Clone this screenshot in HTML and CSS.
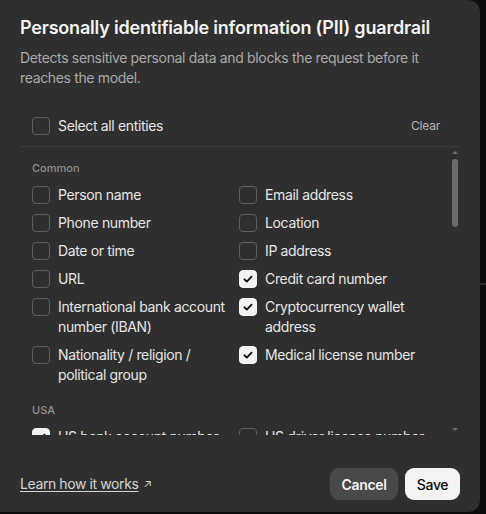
FILE: index.html
```html
<!DOCTYPE html>
<html lang="en">
<head>
<meta charset="utf-8">
<title>PII guardrail</title>
<link rel="stylesheet" href="styles.css">
</head>
<body>
<div class="backdrop-strip"></div>
<div class="dialog">
  <h1 class="title">Personally identifiable information (PII) guardrail</h1>
  <p class="desc">Detects sensitive personal data and blocks the request before it reaches the model.</p>

  <div class="select-all">
    <label class="item">
      <span class="box"></span>
      <span class="label">Select all entities</span>
    </label>
    <span class="clear">Clear</span>
  </div>

  <div class="scroll-wrap">
    <div class="scroll">
      <div class="section-title">Common</div>
      <div class="grid">
        <div class="item"><span class="box"></span><span class="label">Person name</span></div>
        <div class="item"><span class="box"></span><span class="label">Email address</span></div>
        <div class="item"><span class="box"></span><span class="label">Phone number</span></div>
        <div class="item"><span class="box"></span><span class="label">Location</span></div>
        <div class="item"><span class="box"></span><span class="label">Date or time</span></div>
        <div class="item"><span class="box"></span><span class="label">IP address</span></div>
        <div class="item"><span class="box"></span><span class="label">URL</span></div>
        <div class="item"><span class="box checked"><svg viewBox="0 0 18 18"><path d="M5 9.3l2.7 2.7L13 6.3"/></svg></span><span class="label">Credit card number</span></div>
        <div class="item"><span class="box"></span><span class="label">International bank account number (IBAN)</span></div>
        <div class="item"><span class="box checked"><svg viewBox="0 0 18 18"><path d="M5 9.3l2.7 2.7L13 6.3"/></svg></span><span class="label">Cryptocurrency wallet address</span></div>
        <div class="item"><span class="box"></span><span class="label">Nationality / religion / political group</span></div>
        <div class="item"><span class="box checked"><svg viewBox="0 0 18 18"><path d="M5 9.3l2.7 2.7L13 6.3"/></svg></span><span class="label">Medical license number</span></div>
      </div>
      <div class="section-title usa">USA</div>
      <div class="grid">
        <div class="item"><span class="box checked"><svg viewBox="0 0 18 18"><path d="M5 9.3l2.7 2.7L13 6.3"/></svg></span><span class="label">US bank account number</span></div>
        <div class="item"><span class="box"></span><span class="label">US driver license number</span></div>
      </div>
    </div>
    <div class="scrollbar">
      <span class="arrow up"></span>
      <span class="thumb"></span>
      <span class="arrow down"></span>
    </div>
  </div>

  <div class="footer">
    <a class="learn" href="#">Learn how it works</a><span class="ext">↗</span>
    <div class="actions">
      <button class="btn cancel">Cancel</button>
      <button class="btn save">Save</button>
    </div>
  </div>
</div>
</body>
</html>
```

FILE: styles.css
```css
* { box-sizing: border-box; }
html, body {
  margin: 0;
  height: 100%;
}
body {
  background: #0d0d0d;
  font-family: Inter, "Noto Sans", "Liberation Sans", sans-serif;
  color: #ececec;
  overflow: hidden;
  position: relative;
}
.backdrop-strip {
  position: absolute;
  left: 480px;
  top: 283px;
  width: 6px;
  height: 2px;
  background: #2a2a2a;
}
.dialog {
  position: relative;
  width: 480px;
  height: 512px;
  background: #2f2f2f;
  border-radius: 0 12px 12px 0;
  padding: 16px 20px 12px 20px;
  display: flex;
  flex-direction: column;
}
.title {
  margin: 0;
  font-size: 18px;
  line-height: 24px;
  font-weight: 600;
  color: #f3f3f3;
  letter-spacing: -0.2px;
}
.desc {
  margin: 8px 0 0 0;
  font-size: 14px;
  line-height: 20px;
  color: #a8a8a8;
  letter-spacing: -0.35px;
  max-width: 420px;
}
.select-all {
  margin-top: 28px;
  padding: 0 20px 10px 12px;
  border-bottom: 1px solid #3d3d3d;
  display: flex;
  align-items: center;
  justify-content: space-between;
}
.clear {
  font-size: 12px;
  line-height: 16px;
  color: #b4b4b4;
  font-weight: 400;
  letter-spacing: -0.2px;
}
.item {
  display: flex;
  align-items: flex-start;
  gap: 8px;
}
.box {
  flex: none;
  width: 18px;
  height: 18px;
  margin-top: 1px;
  border: 1px solid #5e5e5e;
  border-radius: 4px;
  display: flex;
  align-items: center;
  justify-content: center;
}
.box.checked {
  background: #f2f2f2;
  border-color: #f2f2f2;
}
.box svg {
  width: 18px;
  height: 18px;
  fill: none;
  stroke: #0d0d0d;
  stroke-width: 2;
  stroke-linecap: round;
  stroke-linejoin: round;
}
.label {
  font-size: 14px;
  line-height: 20px;
  color: #e6e6e6;
  letter-spacing: -0.35px;
}
.scroll-wrap {
  position: relative;
  height: 288px;
  overflow: hidden;
}
.scroll {
  padding: 13px 0 0 12px;
}
.section-title {
  font-size: 11px;
  line-height: 16px;
  font-weight: 500;
  color: #8e8e8e;
  margin-bottom: 9px;
}
.section-title.usa {
  margin-top: 17px;
}
.grid {
  display: grid;
  grid-template-columns: 199px 199px;
  column-gap: 8px;
  row-gap: 8px;
}
.scrollbar {
  position: absolute;
  top: 0;
  right: 2px;
  width: 6px;
  height: 288px;
}
.thumb {
  position: absolute;
  left: 0;
  top: 12px;
  width: 6px;
  height: 68px;
  border-radius: 3px;
  background: #6c6c6c;
}
.arrow {
  position: absolute;
  left: 0;
  width: 0;
  height: 0;
  border-left: 3px solid transparent;
  border-right: 3px solid transparent;
}
.arrow.up {
  top: 4px;
  border-bottom: 3px solid #6c6c6c;
}
.arrow.down {
  top: 281px;
  border-top: 3px solid #6c6c6c;
}
.footer {
  margin-top: auto;
  display: flex;
  align-items: center;
}
.learn {
  font-size: 14px;
  line-height: 20px;
  color: #d4d4d4;
  letter-spacing: -0.4px;
  text-decoration: underline;
  text-underline-offset: 2px;
}
.ext {
  margin-left: 5px;
  font-size: 11px;
  color: #d4d4d4;
}
.actions {
  margin-left: auto;
  display: flex;
  gap: 7px;
}
.btn {
  height: 32px;
  border: none;
  border-radius: 9px;
  font-family: inherit;
  font-size: 14px;
  letter-spacing: -0.3px;
  padding: 0;
}
.cancel {
  background: #494949;
  color: #f2f2f2;
  font-weight: 600;
  width: 68px;
}
.save {
  background: #f3f3f3;
  color: #0d0d0d;
  font-weight: 500;
  width: 55px;
}
```
